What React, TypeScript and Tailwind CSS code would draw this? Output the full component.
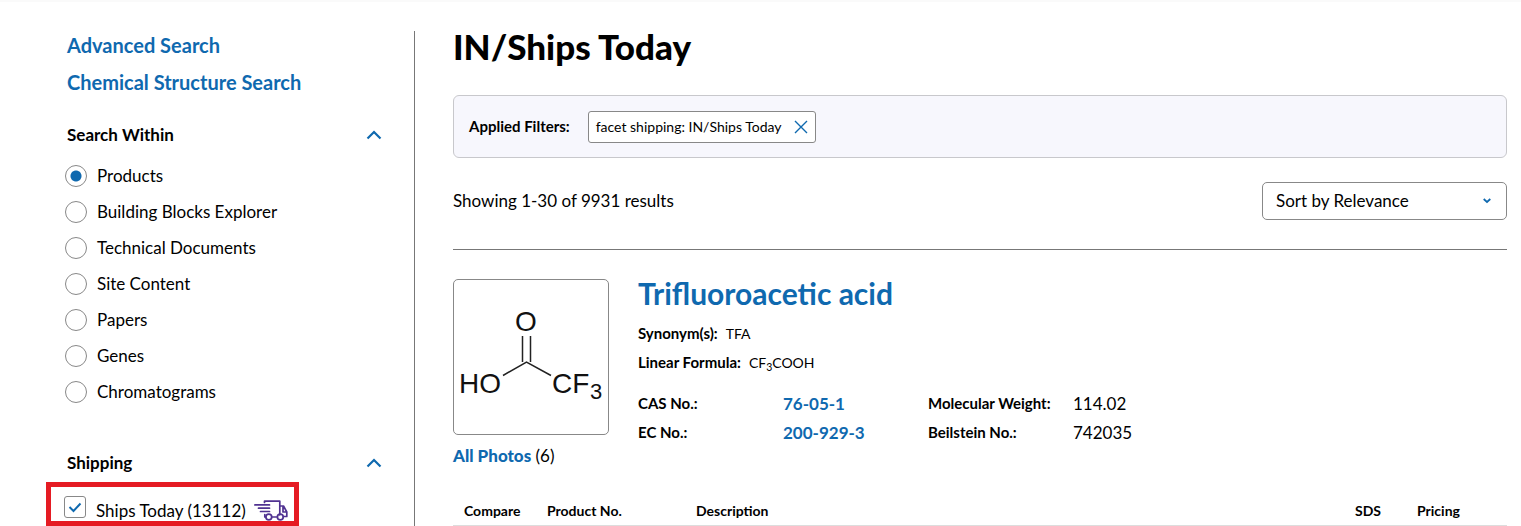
import { useState } from "react";

const searchScopes = [
  "Products",
  "Building Blocks Explorer",
  "Technical Documents",
  "Site Content",
  "Papers",
  "Genes",
  "Chromatograms",
];

function ChevronUp() {
  return (
    <svg width="16" height="10" viewBox="0 0 16 10" fill="none" aria-hidden="true">
      <path d="M1.500 8.500 8 2l6.500 6.500" stroke="#0f69af" strokeWidth="2.200" />
    </svg>
  );
}

function TruckIcon() {
  return (
    <svg
      width="34"
      height="22"
      viewBox="0 0 34 22"
      fill="none"
      stroke="#503291"
      strokeWidth="1.700"
      strokeLinecap="round"
      strokeLinejoin="round"
      aria-hidden="true"
    >
      <path d="M10.500 2.500V1.200h15.300v13.600M25.800 6h3.700l3.300 6v4.500h-3M29 7v5h3.500M10.800 14.500v2.500h1" />
      <path d="M.9 4.900h14.600M4.500 8.200h11M6.500 11.500h9" />
      <circle cx="14.800" cy="17" r="2.900" />
      <circle cx="26.300" cy="17" r="2.900" />
      <path d="M18 17h5" />
    </svg>
  );
}

function Molecule() {
  return (
    <svg viewBox="0 0 154 154" className="w-full" role="img" aria-label="Trifluoroacetic acid structure">
      <g fontFamily="'Liberation Sans', Arial, sans-serif" fontSize="28" fill="#111">
        <text x="61" y="51">O</text>
        <text x="5" y="113">HO</text>
        <text x="98" y="113">CF</text>
        <text x="136" y="119" fontSize="22">3</text>
      </g>
      <path
        d="M68.500 56v26M76.500 56v26M49 95.500 72.500 82 97 95.500"
        fill="none"
        stroke="#222"
        strokeWidth="1.500"
      />
    </svg>
  );
}

function SectionTitle({ title }: { title: string }) {
  return (
    <button type="button" className="flex w-full items-center justify-between pl-[21px] pr-8 text-left">
      <span className="text-[17px] leading-6 font-bold">{title}</span>
      <ChevronUp />
    </button>
  );
}

function Sidebar() {
  const [scope, setScope] = useState("Products");
  const [shipsToday, setShipsToday] = useState(true);

  return (
    <aside className="w-[369px] shrink-0 border-r border-[#777]">
      <nav className="flex flex-col items-start gap-[13px] pl-[21px] pt-[2px] text-[20px] leading-6 font-bold text-[#0f69af]">
        <a href="#advanced">Advanced Search</a>
        <a href="#structure">Chemical Structure Search</a>
      </nav>

      <div className="mt-[29px]">
        <SectionTitle title="Search Within" />
        <div className="mt-[11px] pl-[19px]">
          {searchScopes.map((item) => (
            <label key={item} className="flex h-9 items-center gap-[10px] text-[17px]">
              <input
                type="radio"
                name="scope"
                checked={scope === item}
                onChange={() => setScope(item)}
                className="size-[22px] appearance-none rounded-full border border-[#888] bg-white checked:bg-[radial-gradient(circle,#0f69af_5px,white_6px)]"
              />
              {item}
            </label>
          ))}
        </div>
      </div>

      <div className="mt-[41px]">
        <SectionTitle title="Shipping" />
        <div className="mt-[7px] flex h-11 w-[253px] items-center border-[5px] border-[#e51b23] pl-[13px] pt-[10px]">
          <label className="flex items-center gap-[10px] text-[17px]">
            <span className="relative mb-1 size-[22px]">
              <input
                type="checkbox"
                checked={shipsToday}
                onChange={(e) => setShipsToday(e.target.checked)}
                className="peer block size-[22px] appearance-none rounded-[3px] border border-[#888] bg-white"
              />
              <svg
                viewBox="0 0 22 22"
                fill="none"
                className="pointer-events-none absolute inset-0 hidden peer-checked:block"
                aria-hidden="true"
              >
                <path d="M5.500 11 9.500 15 16.500 7.500" stroke="#0f69af" strokeWidth="2" />
              </svg>
            </span>
            <span className="flex items-center gap-2 pt-1">
              Ships Today (13112)
              <TruckIcon />
            </span>
          </label>
        </div>
      </div>
    </aside>
  );
}

function AppliedFilters() {
  return (
    <div className="mt-[34px] flex h-[63px] items-center rounded-md border border-[#c8c8cc] bg-[#f7f7fd] px-[15px] text-sm">
      <span className="text-[15px] font-bold">Applied Filters:</span>
      <button
        type="button"
        className="ml-[18px] flex h-8 items-center gap-3 rounded-[3px] border border-[#888] bg-white px-[7px]"
      >
        facet shipping: IN/Ships Today
        <svg width="14" height="14" viewBox="0 0 14 14" aria-hidden="true">
          <path d="M1 1l12 12M13 1 1 13" stroke="#0f69af" strokeWidth="1.400" />
        </svg>
      </button>
    </div>
  );
}

function ResultsBar() {
  return (
    <div className="mt-6 flex items-center justify-between border-b border-[#777] pb-[29px] text-[17px]">
      <p>Showing 1-30 of 9931 results</p>
      <div className="relative w-[245px]">
        <select
          aria-label="Sort results"
          className="h-[38px] w-full appearance-none rounded-[5px] border border-[#888] bg-white pl-[13px] pr-8"
        >
          <option>Sort by Relevance</option>
          <option>Sort by Name</option>
        </select>
        <svg
          width="8"
          height="6"
          viewBox="0 0 8 6"
          fill="none"
          className="pointer-events-none absolute right-4 top-4"
          aria-hidden="true"
        >
          <path d="M.7 1 4 4l3.300-3" stroke="#0f69af" strokeWidth="1.700" />
        </svg>
      </div>
    </div>
  );
}

function ProductCard() {
  return (
    <article className="mt-[29px] flex gap-[29px]">
      <div className="w-[156px] shrink-0">
        <div className="rounded-[5px] border border-[#888]">
          <Molecule />
        </div>
        <p className="mt-[9px] text-[17px] leading-6">
          <a href="#photos" className="font-black text-[#0f69af]">
            All Photos
          </a>{" "}
          (6)
        </p>
      </div>
      <div className="text-sm">
        <h2 className="text-[30px] leading-7 font-bold text-[#0f69af]">
          <a href="#tfa">Trifluoroacetic acid</a>
        </h2>
        <p className="mt-3 leading-7">
          <b className="mr-2 text-[15px] font-bold">Synonym(s):</b>TFA
        </p>
        <p className="leading-7">
          <b className="mr-2 text-[15px] font-bold">Linear Formula:</b>CF<sub>3</sub>COOH
        </p>
        <dl className="mt-3 grid grid-cols-[145px_145px_145px_auto] items-center leading-[29px]">
          <dt className="text-[15px] font-bold">CAS No.:</dt>
          <dd className="text-[17px] font-bold text-[#0f69af]">
            <a href="#cas">76-05-1</a>
          </dd>
          <dt className="text-[15px] font-bold">Molecular Weight:</dt>
          <dd className="text-[17px]">114.02</dd>
          <dt className="text-[15px] font-bold">EC No.:</dt>
          <dd className="text-[17px] font-bold text-[#0f69af]">
            <a href="#ec">200-929-3</a>
          </dd>
          <dt className="text-[15px] font-bold">Beilstein No.:</dt>
          <dd className="text-[17px]">742035</dd>
        </dl>
      </div>
    </article>
  );
}

export default function App() {
  return (
    <div className="flex border-t-2 border-[#fafafa] bg-white pl-[46px] pr-[14px] pt-[29px] font-['Lato',sans-serif] text-black">
      <Sidebar />
      <main className="min-w-0 flex-1 pl-[38px]">
        <h1 className="text-[35px] leading-[30px] font-black">IN/Ships Today</h1>
        <AppliedFilters />
        <ResultsBar />
        <ProductCard />
        <table className="mt-[29px] w-full table-fixed border-b border-[#ddd] text-left text-sm leading-7">
          <thead>
            <tr>
              <th className="w-[94px] pl-[11px] font-bold">Compare</th>
              <th className="w-[149px] font-bold">Product No.</th>
              <th className="font-bold">Description</th>
              <th className="w-[62px] font-bold">SDS</th>
              <th className="w-[90px] font-bold">Pricing</th>
            </tr>
          </thead>
        </table>
      </main>
    </div>
  );
}
